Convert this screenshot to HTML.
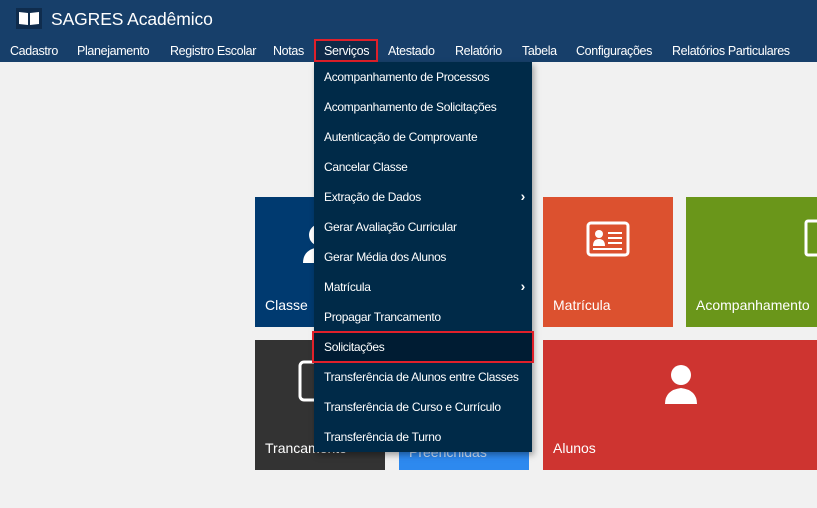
<!DOCTYPE html>
<html><head><meta charset="utf-8"><style>
*{margin:0;padding:0;box-sizing:border-box}
body{width:817px;height:508px;background:#f1f1f1;font-family:"Liberation Sans",sans-serif;position:relative;overflow:hidden;color:#fff}
.hdr{position:absolute;left:0;top:0;width:817px;height:62px;background:#173f6a}
.title{position:absolute;left:51px;top:9px;font-size:17.5px;letter-spacing:-0.1px}
.logo{position:absolute;left:16px;top:8px;width:26px;height:21px;background:#0f2c4d}
.nav span{position:absolute;top:44px;font-size:12.5px;letter-spacing:-0.35px;white-space:nowrap}
.sel{position:absolute;left:314px;top:39px;width:64px;height:23px;border:2px solid #e0202a;background:#0f2a48}
.tile{position:absolute}
.tile .lbl{position:absolute;left:10px;font-size:14px;white-space:nowrap}
.menu{position:absolute;left:314px;top:62px;width:218px;height:390px;background:#002a48;box-shadow:2px 3px 6px rgba(0,0,0,.35)}
.menu div{height:30px;line-height:30px;padding-left:10px;font-size:12px;letter-spacing:-0.3px;position:relative;white-space:nowrap}
.menu .hi{background:#001c33;outline:2px solid #e0202a;outline-offset:-1px;margin-left:-1px;margin-right:-1px;padding-left:11px}
.arr{position:absolute;right:7px;top:-1px;font-size:14px;font-weight:bold}
</style></head><body>
<div class="hdr">
 <div class="logo"><svg width="26" height="21" viewBox="0 0 26 21"><path d="M3 4 L12 5 L12 17 L3 16Z M14 5 L23 4 L23 16 L14 17Z" fill="#fff"/></svg></div>
 <div class="title">SAGRES Acadêmico</div>
 <div class="sel"></div>
 <div class="nav">
  <span style="left:10px">Cadastro</span>
  <span style="left:77px">Planejamento</span>
  <span style="left:170px">Registro Escolar</span>
  <span style="left:273px">Notas</span>
  <span style="left:324px">Serviços</span>
  <span style="left:388px">Atestado</span>
  <span style="left:455px">Relatório</span>
  <span style="left:522px">Tabela</span>
  <span style="left:576px">Configurações</span>
  <span style="left:672px">Relatórios Particulares</span>
 </div>
</div>

<div class="tile" style="left:255px;top:197px;width:130px;height:130px;background:#003a70">
 <svg style="position:absolute;left:40px;top:22px" width="50" height="50" viewBox="0 0 50 50"><circle cx="25" cy="16" r="11" fill="#fff"/><path d="M8 44 Q8 30 25 28 Q42 30 42 44Z" fill="#fff"/></svg>
 <div class="lbl" style="top:100px">Classe</div></div>
<div class="tile" style="left:543px;top:197px;width:130px;height:130px;background:#dc512f">
 <svg style="position:absolute;left:43px;top:24px" width="44" height="36" viewBox="0 0 44 36"><rect x="2" y="2" width="40" height="32" rx="3" fill="none" stroke="#fff" stroke-width="3"/><circle cx="13" cy="13" r="4" fill="#fff"/><path d="M7 25 Q7 18 13 18 Q19 18 19 25Z" fill="#fff"/><rect x="22" y="11" width="14" height="2" fill="#fff"/><rect x="22" y="16" width="14" height="2" fill="#fff"/><rect x="22" y="21" width="14" height="2" fill="#fff"/><rect x="7" y="27" width="29" height="2" fill="#fff"/></svg>
 <div class="lbl" style="top:100px">Matrícula</div></div>
<div class="tile" style="left:686px;top:197px;width:140px;height:130px;background:#6a961a">
 <svg style="position:absolute;left:118px;top:22px" width="20" height="40"><rect x="2" y="2" width="16" height="34" rx="2" fill="none" stroke="#fff" stroke-width="3"/></svg>
 <div class="lbl" style="top:100px">Acompanhamento</div></div>
<div class="tile" style="left:255px;top:340px;width:130px;height:130px;background:#333">
 <svg style="position:absolute;left:43px;top:20px" width="30" height="45"><rect x="2" y="2" width="40" height="38" rx="4" fill="none" stroke="#fff" stroke-width="3"/></svg>
 <div class="lbl" style="top:100px">Trancamento</div></div>
<div class="tile" style="left:399px;top:340px;width:130px;height:130px;background:#2d89ef">
 <div class="lbl" style="top:104px;color:#cfe2fa">Preenchidas</div></div>
<div class="tile" style="left:543px;top:340px;width:274px;height:130px;background:#ce3430">
 <svg style="position:absolute;left:113px;top:20px" width="50" height="50" viewBox="0 0 50 50"><circle cx="25" cy="15" r="10" fill="#fff"/><path d="M9 44 Q9 30 25 28 Q41 30 41 44Z" fill="#fff"/></svg>
 <div class="lbl" style="top:100px">Alunos</div></div>

<div class="menu">
 <div>Acompanhamento de Processos</div>
 <div>Acompanhamento de Solicitações</div>
 <div>Autenticação de Comprovante</div>
 <div>Cancelar Classe</div>
 <div>Extração de Dados<span class="arr">&#x203A;</span></div>
 <div>Gerar Avaliação Curricular</div>
 <div>Gerar Média dos Alunos</div>
 <div>Matrícula<span class="arr">&#x203A;</span></div>
 <div>Propagar Trancamento</div>
 <div class="hi">Solicitações</div>
 <div>Transferência de Alunos entre Classes</div>
 <div>Transferência de Curso e Currículo</div>
 <div>Transferência de Turno</div>
</div>
</body></html>
